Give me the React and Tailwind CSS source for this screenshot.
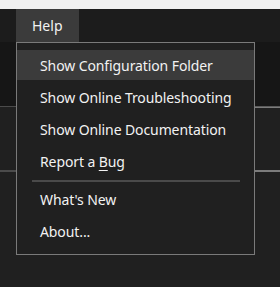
export default function App() {
  const items = [
    "Show Configuration Folder",
    "Show Online Troubleshooting",
    "Show Online Documentation",
  ];

  return (
    <div
      className="relative w-[280px] h-[287px] overflow-hidden bg-[#202020] text-[#f2f2f2]"
      style={{ fontFamily: '"Noto Sans", "Open Sans", sans-serif' }}
    >
      {/* title strip */}
      <div className="h-[9px] bg-[#f0f0f0]" />

      {/* menubar */}
      <div className="flex h-[33px] bg-[#1c1c1c]">
        <div className="w-[16px]" />
        <div className="flex w-[63px] items-center pl-[16px] text-[14px] bg-[#3b3b3b]">Help</div>
      </div>

      {/* panels behind the menu */}
      <div className="flex h-[64px]">
        <div className="w-[16px] bg-[#161616]" />
        <div className="flex-1 bg-[#1c1c1c]" />
        <div className="w-[26px] bg-[#161616]" />
      </div>
      <div className="flex h-[1px]">
        <div className="w-[16px] bg-[#4b4b4b]" />
        <div className="flex-1" />
        <div className="w-[26px] bg-[#5a5a5a]" />
      </div>
      <div className="flex h-[1px]">
        <div className="w-[16px]" />
        <div className="flex-1" />
        <div className="w-[26px] bg-[#7c7c7c]" />
      </div>
      <div className="h-[62px]" />
      <div className="flex h-[2px]">
        <div className="w-[16px] bg-[#4b4b4b]" />
        <div className="flex-1" />
        <div className="w-[26px] bg-[#7c7c7c]" />
      </div>

      {/* dropdown menu */}
      <div className="absolute left-[16px] top-[42px] w-[239px] border border-[#7a7a7a] bg-[#202020] pt-[7px] pb-[8px] text-[14px] tracking-[-0.1px] whitespace-nowrap">
        <div className="flex flex-col gap-[2px]">
          {items.map((label, i) => (
            <div
              key={label}
              className={`flex h-[30px] items-center pl-[23px] ${i === 0 ? "bg-[#3b3b3b]" : ""}`}
            >
              {label}
            </div>
          ))}
          <div className="flex h-[30px] items-center pl-[23px]">
            Report a&nbsp;<span className="underline underline-offset-[3px]">B</span>ug
          </div>
        </div>
        <div className="mt-[4px] mb-[2px] ml-[15px] mr-[14px] h-[2px] bg-[#4a4a4a]" />
        <div className="flex flex-col gap-[2px]">
          <div className="flex h-[30px] items-center pl-[23px]">What's New</div>
          <div className="flex h-[30px] items-center pl-[23px]">About...</div>
        </div>
      </div>
    </div>
  );
}
